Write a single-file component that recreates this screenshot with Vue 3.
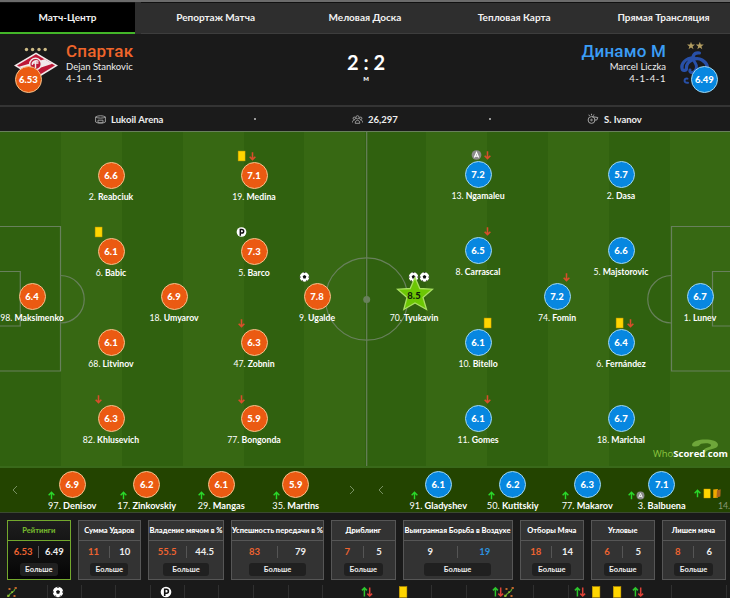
<template>
  <div class="match">
    <svg class="sprite" width="0" height="0">
      <symbol id="i-card" viewBox="0 0 12 12"><rect x="2.3" y="0.6" width="7.6" height="10.8" fill="#ffd500" stroke="#c99a00" stroke-width="0.5" /></symbol>
      <symbol id="i-second" viewBox="0 0 12 12">
        <path d="M1.5 1.2 7 .6V11L1.5 11.4z" fill="#f0a800" />
        <path d="M6 2 10.5 1 10 9.6 5.4 10.8z" fill="#b0641c" />
      </symbol>
      <symbol id="i-off" viewBox="0 0 12 12"><path d="M6 2v8M2.9 6.8 6 10 9.1 6.8" fill="none" stroke="#d94e2b" stroke-width="1.7" /></symbol>
      <symbol id="i-on" viewBox="0 0 12 12"><path d="M6 11V2M2.2 5.6 6 1.8 9.8 5.6" fill="none" stroke="#2ad82a" stroke-width="1.9" /></symbol>
      <symbol id="i-swap" viewBox="0 0 12 12">
        <path d="M3.4 10.5V2M.9 4.4 3.4 1.9 5.9 4.4" fill="none" stroke="#2cc42c" stroke-width="1.5" />
        <path d="M8.7 1.5V10M6.3 7.6 8.7 10 11.1 7.6" fill="none" stroke="#dc4136" stroke-width="1.5" />
      </symbol>
      <symbol id="i-ball" viewBox="0 0 12 12">
        <circle cx="6" cy="6" r="5.2" fill="#fff" />
        <path d="M6 3.9 8 5.3 7.2 7.7H4.8L4 5.3z" fill="#111" />
        <path d="M4.6.9h2.8L6 2zM.9 4.5.8 7l1.2-.8zM11.1 4.5l.1 2.5-1.2-.8zM2.4 9.8 4.5 11 4 9.5zM9.6 9.8 7.5 11 8 9.5z" fill="#111" />
      </symbol>
      <symbol id="i-pen" viewBox="0 0 12 12">
        <circle cx="6" cy="6" r="5.3" fill="#fff" />
        <path d="M4.7 10V3.2H6.4a2 2 0 0 1 0 4H4.7" fill="none" stroke="#111" stroke-width="1.6" />
      </symbol>
      <symbol id="i-assist" viewBox="0 0 12 12">
        <circle cx="6" cy="6" r="5.3" fill="#8b8b8b" />
        <path d="M3.6 8.8 6 3.2 8.4 8.8M4.5 7.2h3" fill="none" stroke="#fff" stroke-width="1.2" />
      </symbol>
      <symbol id="i-route" viewBox="0 0 12 12">
        <path d="M3 10C3 6.5 8.5 7 8.8 3" fill="none" stroke="#55a52c" stroke-width="1.4" />
        <path d="M2.5 2h2v2h-2zM8.6 1h2.2v2H8.6zM7.5 9h2v2h-2z" fill="#c2662b" />
        <path d="M1.2 8.8h2.2V11H1.2zM5.2 5.2h1.8V7H5.2z" fill="#8db832" />
      </symbol>
    </svg>

    <nav class="tabs">
      <a v-for="(t, i) in tabs" :key="t" class="tab" :class="{ active: i === 0 }">{{ t }}</a>
    </nav>

    <header class="score-head">
      <div class="crest">
        <svg width="45" height="46" viewBox="0 0 45 46">
          <g fill="#cdbb86"><circle cx="12.5" cy="8.5" r="1.7" /><circle cx="18.6" cy="8.5" r="1.7" /><circle cx="25" cy="8.5" r="1.7" /><circle cx="31.2" cy="8.5" r="1.7" /></g>
          <path d="M22 11.5 44 24.5 22 38 0 24.5z" fill="#f1e9ea" />
          <path d="M22 13.2 41 24.5 22 36 3 24.5z" fill="#bd1736" />
          <path d="M5 25.8 30.6 18.2 38.4 22.8 13.5 31z" fill="#f1e9ea" />
          <circle cx="21.5" cy="23" r="5.8" fill="#bd1736" stroke="#f1e9ea" stroke-width="1.4" />
          <path d="M24.5 20.5c-3-2-7 .5-6 3.5M18.5 22h6M21.5 20v7" fill="none" stroke="#f1e9ea" stroke-width="1.4" />
        </svg>
        <span class="rating home">6.53</span>
      </div>
      <div class="team">
        <div class="team-name">Спартак</div>
        <div class="coach">Dejan Stankovic</div>
        <div class="formation">4-1-4-1</div>
      </div>
      <div class="result">
        <div class="goals">2 : 2</div>
        <div class="status">м</div>
      </div>
      <div class="team away">
        <div class="team-name">Динамо М</div>
        <div class="coach">Marcel Liczka</div>
        <div class="formation">4-1-4-1</div>
      </div>
      <div class="crest away">
        <svg width="45" height="46" viewBox="0 0 45 46">
          <path id="st" d="M18 .8 19 3.6 22 3.6 19.6 5.4 20.5 8.2 18 6.5 15.5 8.2 16.4 5.4 14 3.6 17 3.6z" fill="#b39d61" />
          <path d="M26.8 .8 27.8 3.6 30.8 3.6 28.4 5.4 29.3 8.2 26.8 6.5 24.3 8.2 25.2 5.4 22.8 3.6 25.8 3.6z" fill="#b39d61" />
          <g fill="none" stroke="#2850a8" stroke-linecap="round">
            <path d="M26.5 12C20 11 18.5 17 21 20c2 3 4 6 1 10-2 2.600-6 2-5-1" stroke-width="3" />
            <path d="M21 16.500C12 17 8 23 9 27.500c.6 3 5 2.500 4.500-1C13.500 20 23 15.500 29 19c5 3 7 7 4 13" stroke-width="3.200" />
            <path d="M14.500 37.600c-3.500-1.200-4.500 5 .5 4.200" stroke-width="2" />
          </g>
        </svg>
        <span class="rating">6.49</span>
      </div>
    </header>

    <div class="info">
      <div class="info-item venue">
        <svg width="11" height="9" viewBox="0 0 11 9" fill="none" stroke="#a5a5a5" stroke-width="0.9"><path d="M.6 2C3 .3 8 .3 10.400 2v5C8 8.600 3 8.600.6 7zM.6 2c2 1.500 8 1.500 9.800 0M3 5.200h5v2.500H3z" /></svg>
        Lukoil Arena
      </div>
      <i class="dot"></i>
      <div class="info-item crowd">
        <svg width="11" height="9" viewBox="0 0 11 9" fill="none" stroke="#a5a5a5" stroke-width="0.9"><circle cx="5.500" cy="2.300" r="1.600" /><circle cx="2.300" cy="3.300" r="1.200" /><circle cx="8.700" cy="3.300" r="1.200" /><path d="M3.200 8.300c0-4 4.600-4 4.600 0zM.4 7.500c0-2 1-2.500 2.200-2.500M10.600 7.500c0-2-1-2.500-2.200-2.500" /></svg>
        26,297
      </div>
      <i class="dot"></i>
      <div class="info-item referee">
        <svg width="12" height="12" viewBox="0 0 12 12" fill="none" stroke="#a5a5a5" stroke-width="1"><circle cx="4.500" cy="7" r="3.400" /><path d="M5 3.600 10.800 4.500 9.800 7H7.800M4.500.8v1.500M1.800 1.700 2.600 3M7 1.500 6.300 2.700" /><circle cx="4.500" cy="7" r=".8" /></svg>
        S. Ivanov
      </div>
    </div>

    <section class="pitch">
      <svg class="lines" width="730" height="335" viewBox="0 0 730 335" fill="none" stroke="#68805c" stroke-width="1.200">
        <path d="M0 .5H730M366.700 0V335M0 95.500H60.500V240H0M0 140.500H20.300V195H0M730 95.500H671.500V240H730M730 140.500H712.500V195H730" />
        <path d="M60.500 144.500A23.500 23.500 0 0 1 60.500 192M671.500 144.500A23.500 23.500 0 0 0 671.500 192" />
        <circle cx="366.700" cy="168" r="41.200" />
        <circle cx="366.700" cy="168.500" r="3.500" fill="#68805c" stroke="none" />
      </svg>
      <div
        v-for="p in players"
        :key="p.name"
        class="player"
        :class="p.side"
        :style="{ left: p.x + 'px', top: p.y + 'px' }"
      >
        <div v-if="p.icons" class="marks">
          <svg v-for="(ic, i) in p.icons" :key="i" width="11" height="12"><use :href="'#i-' + ic" /></svg>
        </div>
        <div v-if="p.best" class="star">
          <svg width="38" height="36" viewBox="0 0 38 36"><path d="M19 1.500 23.800 12.500 36.500 13.200 27 21.500 30.500 33.500 19 27 7.800 33.500 11 21.500 1.500 13.200 14.200 12.500z" fill="#6cc704" stroke="#a9df62" stroke-width="1.300" /></svg>
          <span>{{ p.rate }}</span>
        </div>
        <span v-else class="rating" :class="p.side">{{ p.rate }}</span>
        <div class="pname"><span>{{ p.num }}.</span> {{ p.name }}</div>
      </div>
      <div class="brand">
        <svg width="28" height="17" viewBox="0 0 28 17"><path d="M1 6C1.500 2 8 .5 14 .5c7 0 13 1.800 13 5.200 0 3.500-6 4.300-9.500 5.300-1.800.6-2.500 1.500-3 2.500h-2.700c.2-3 2-4.200 4.700-5 2.500-.8 3.500-1.200 3.500-2.300 0-1.300-2.500-1.900-5.500-1.900-3.500 0-6 .8-6.500 2.500-2.500 1.200-7 1-7-.8z" fill="#6ea63a" /></svg>
        <div><span>Who</span>Scored<span>.</span>com</div>
      </div>
    </section>

    <section class="bench">
      <div v-for="b in bench" :key="b.side" class="bench-side" :class="b.side">
        <svg class="arrow" width="6" height="10" viewBox="0 0 6 10"><path d="M5 1 1 5 5 9" /></svg>
        <div v-for="s in b.list" :key="s.name" class="sub">
          <span class="rating" :class="b.side">{{ s.rate }}</span>
          <div class="pname"><span>{{ s.num }}.</span> {{ s.name }}</div>
          <div class="sub-marks" :style="{ left: s.off + 'px' }">
            <svg v-for="ic in s.icons" :key="ic" width="9" height="11"><use :href="'#i-' + ic" /></svg>
          </div>
        </div>
        <div v-if="b.side === 'away'" class="sub next">
          <div class="sub-marks">
            <svg width="9" height="11"><use href="#i-on" /></svg>
            <svg width="10" height="11"><use href="#i-card" /></svg>
            <svg width="10" height="11"><use href="#i-second" /></svg>
          </div>
          <span>14.</span>
        </div>
        <svg class="arrow right" width="6" height="10" viewBox="0 0 6 10"><path d="M1 1 5 5 1 9" /></svg>
      </div>
    </section>

    <section class="stats">
      <div v-for="(s, i) in stats" :key="s.title" class="stat" :class="{ active: i === 0 }">
        <div class="stat-title">{{ s.title }}</div>
        <div class="stat-vals">
          <b :class="{ hot: i === 0 || s.home > s.away }">{{ s.home }}</b>
          <b :class="{ cool: i > 0 && s.away > s.home }">{{ s.away }}</b>
        </div>
        <button>Больше</button>
      </div>
    </section>

    <section class="timeline">
      <i v-for="(w, i) in ticks" :key="i" class="tick" :style="{ width: w + 'px' }"></i>
      <svg v-for="e in events" :key="e.x" class="event" width="12" height="12" :style="{ left: e.x + 'px' }"><use :href="'#i-' + e.icon" /></svg>
    </section>
  </div>
</template>

<script setup>
const tabs = ['Матч-Центр', 'Репортаж Матча', 'Меловая Доска', 'Тепловая Карта', 'Прямая Трансляция']

// x / y - центр кружка относительно поля
const players = [
  { side: 'home', num: 98, name: 'Maksimenko', rate: '6.4', x: 32, y: 166 },
  { side: 'home', num: 2, name: 'Reabciuk', rate: '6.6', x: 111, y: 45 },
  { side: 'home', num: 6, name: 'Babic', rate: '6.1', x: 111, y: 121, icons: ['card'] },
  { side: 'home', num: 68, name: 'Litvinov', rate: '6.1', x: 111, y: 212 },
  { side: 'home', num: 82, name: 'Khlusevich', rate: '6.3', x: 111, y: 288, icons: ['off'] },
  { side: 'home', num: 18, name: 'Umyarov', rate: '6.9', x: 174, y: 166 },
  { side: 'home', num: 19, name: 'Medina', rate: '7.1', x: 254, y: 45, icons: ['card', 'off'] },
  { side: 'home', num: 5, name: 'Barco', rate: '7.3', x: 254, y: 121, icons: ['pen'] },
  { side: 'home', num: 47, name: 'Zobnin', rate: '6.3', x: 254, y: 212, icons: ['off'] },
  { side: 'home', num: 77, name: 'Bongonda', rate: '5.9', x: 254, y: 288, icons: ['off'] },
  { side: 'home', num: 9, name: 'Ugalde', rate: '7.8', x: 317, y: 166, icons: ['ball'] },
  { side: 'away', num: 70, name: 'Tyukavin', rate: '8.5', x: 414, y: 166, icons: ['ball', 'ball'], best: true },
  { side: 'away', num: 13, name: 'Ngamaleu', rate: '7.2', x: 478, y: 44, icons: ['assist', 'off'] },
  { side: 'away', num: 8, name: 'Carrascal', rate: '6.5', x: 478, y: 120, icons: ['off'] },
  { side: 'away', num: 10, name: 'Bitello', rate: '6.1', x: 478, y: 212, icons: ['card'] },
  { side: 'away', num: 11, name: 'Gomes', rate: '6.1', x: 478, y: 288, icons: ['off'] },
  { side: 'away', num: 74, name: 'Fomin', rate: '7.2', x: 557, y: 166, icons: ['off'] },
  { side: 'away', num: 2, name: 'Dasa', rate: '5.7', x: 621, y: 44 },
  { side: 'away', num: 5, name: 'Majstorovic', rate: '6.6', x: 621, y: 120 },
  { side: 'away', num: 6, name: 'Fernández', rate: '6.4', x: 621, y: 212, icons: ['card', 'off'] },
  { side: 'away', num: 18, name: 'Marichal', rate: '6.7', x: 621, y: 288 },
  { side: 'away', num: 1, name: 'Lunev', rate: '6.7', x: 700, y: 166 }
]

const bench = [
  {
    side: 'home',
    list: [
      { num: 97, name: 'Denisov', rate: '6.9', off: 12, icons: ['on'] },
      { num: 17, name: 'Zinkovskiy', rate: '6.2', off: 9, icons: ['on'] },
      { num: 29, name: 'Mangas', rate: '6.1', off: 13, icons: ['on'] },
      { num: 35, name: 'Martins', rate: '5.9', off: 13, icons: ['on'] }
    ]
  },
  {
    side: 'away',
    list: [
      { num: 91, name: 'Gladyshev', rate: '6.1', off: 9, icons: ['on'] },
      { num: 50, name: 'Kutitskiy', rate: '6.2', off: 11, icons: ['on'] },
      { num: 77, name: 'Makarov', rate: '6.3', off: 11, icons: ['on'] },
      { num: 3, name: 'Balbuena', rate: '7.1', off: 2, icons: ['on', 'assist'] }
    ]
  }
]

const stats = [
  { title: 'Рейтинги', home: 6.53, away: 6.49 },
  { title: 'Сумма Ударов', home: 11, away: 10 },
  { title: 'Владение мячом в %', home: 55.5, away: 44.5 },
  { title: 'Успешность передачи в %', home: 83, away: 79 },
  { title: 'Дриблинг', home: 7, away: 5 },
  { title: 'Выигранная Борьба в Воздухе', home: 9, away: 19 },
  { title: 'Отборы Мяча', home: 18, away: 14 },
  { title: 'Угловые', home: 6, away: 5 },
  { title: 'Лишен мяча', home: 8, away: 6 }
]

const ticks = [48, 34, 34, 35, 34, 34, 35, 35, 34, 109, 35, 67, 35, 103, 55]

const events = [
  { x: 6, icon: 'route' },
  { x: 52, icon: 'ball' },
  { x: 160, icon: 'pen' },
  { x: 361, icon: 'swap' },
  { x: 397, icon: 'card' },
  { x: 492, icon: 'swap' },
  { x: 503, icon: 'route' },
  { x: 574, icon: 'swap' },
  { x: 590, icon: 'card' },
  { x: 611, icon: 'card' },
  { x: 632, icon: 'swap' }
]
</script>

<style>
body { background: #1a1a1a; overflow: hidden; }
</style>

<style scoped>
.match { width: 730px; height: 598px; overflow: hidden; background: #1a1a1a; color: #eee; font-family: Lato, "Open Sans", sans-serif; display: flex; flex-direction: column; }
.match * { box-sizing: border-box; }
.sprite { position: absolute; }

.tabs { display: flex; height: 34px; flex: none; border-top: 2px solid #6b6b6b; background: #2e2e2e; }
.tab { flex: 0 0 149.3px; display: flex; align-items: center; justify-content: center; font-size: 10px; font-weight: 700; color: #f2f2f2; border-top: 1px solid #111; padding-bottom: 2px; white-space: nowrap; border-bottom: 1px solid #3d3d3d; }
.tab.active { flex-basis: 135px; margin-right: 6px; background: #000; border-bottom: 2px solid #43b629; padding-bottom: 1px; }

.score-head { display: flex; height: 73px; flex: none; padding: 7px 12px 0 14px; border-bottom: 2px solid #343434; }
.crest { position: relative; width: 45px; }
.crest svg { display: block; }
.crest .rating { position: absolute; left: 1px; top: 25px; }
.crest.away .rating { left: auto; right: 0; }
.team { width: 150px; margin-left: 7px; }
.team.away { margin: 0 7px 0 0; text-align: right; }
.team-name { color: #f0652a; font: 500 17px/20px Roboto, sans-serif; letter-spacing: 0.2px; }
.away .team-name { color: #3b9df5; }
.coach { font-size: 9.5px; line-height: 12px; }
.formation { font-size: 9.5px; line-height: 12px; letter-spacing: 0.6px; }
.result { flex: 1; text-align: center; padding-top: 9px; }
.goals { font-size: 20px; line-height: 24px; font-weight: 700; color: #fff; }
.status { font-size: 8px; line-height: 8px; font-weight: 700; }

.rating { display: flex; align-items: center; justify-content: center; width: 27px; height: 27px; border-radius: 50%; background: #0787e0; border: 1px solid #a2d8f0; color: #fff; font-size: 9.5px; font-weight: 900; }
.rating.home { background: #eb5a12; border-color: #f3c38c; }

.info { display: flex; align-items: center; height: 24px; flex: none; padding-left: 95px; font-size: 9.5px; font-weight: 700; background: #1b1b1b; }
.info-item { display: flex; align-items: center; gap: 5px; }
.venue { width: 159px; }
.crowd { width: 136px; padding-left: 96px; width: 233px; }
.referee { padding-left: 96px; }
.dot { width: 2px; height: 2px; background: #999; }

.pitch { position: relative; height: 335px; flex: none; overflow: hidden; background: repeating-linear-gradient(90deg, #30610f 0 60.9px, #376813 60.9px 121.8px); }
.lines { position: absolute; left: 0; top: 0; }
.player { position: absolute; width: 0; height: 0; display: flex; flex-direction: column; align-items: center; }
.player > .rating { flex: none; margin-top: -14px; }
.marks { position: absolute; top: -26px; left: -18px; display: flex; }
.player.away .marks { left: auto; right: -15px; }
.pname { font-size: 8.7px; line-height: 11px; font-weight: 700; color: #fff; white-space: nowrap; margin-top: 2px; }
.pname span { font-weight: 400; }
.star { position: relative; flex: none; width: 38px; height: 29px; margin-top: -16px; display: flex; justify-content: center; }
.star svg { position: absolute; left: 1px; top: -5px; }
.star span { position: relative; color: #10200a; font-size: 9.5px; font-weight: 900; line-height: 29px; }
.player.away:has(.star) .marks { right: -16px; }
.brand { position: absolute; left: 653px; top: 309px; font: 700 9.5px/12px "Open Sans", sans-serif; color: #fff; padding-top: 8px; }
.brand svg { position: absolute; left: 38px; top: -1px; }
.brand div { position: relative; }
.brand span { color: #8cc63f; font-weight: 400; }

.bench { display: flex; height: 47px; flex: none; background: #234400; border-top: 2px solid #39691a; border-bottom: 1px solid #3b4a30; }
.bench-side { display: flex; align-items: flex-start; width: 366px; padding-left: 12px; }
.bench-side.away { width: 364px; overflow: hidden; }
.arrow { fill: none; stroke: #779061; stroke-width: 1; margin: 17px 17px 0 0; flex: none; }
.arrow.right { margin: 17px 0 0 16px; }
.away .arrow.right { margin-left: -16px; }
.sub { position: relative; width: 74.5px; flex: none; display: flex; flex-direction: column; align-items: center; padding-top: 3px; }
.sub .pname { font-size: 9.2px; margin-top: 2px; }
.sub-marks { position: absolute; top: 22px; display: flex; }
.next { width: 50px; height: 44px; }
.next .sub-marks { left: -6px; top: 20px; }
.next > span { margin-top: 29px; font-size: 8.7px; line-height: 11px; color: #8a9a78; }

.stats { display: grid; grid-template-columns: 63.5px 63.5px 76px 93px 64.5px 110px 64.5px 63.5px 64px; gap: 7px; padding: 7px 0 0 7px; flex: none; }
.stat { height: 60px; border: 1px solid #565656; background: #333; display: flex; flex-direction: column; align-items: center; }
.stat-title { width: 100%; height: 20px; border-bottom: 1px solid #565656; font-size: 7.5px; line-height: 19px; font-weight: 900; text-align: center; white-space: nowrap; display: flex; justify-content: center; color: #fff; }
.stat-vals { width: 100%; display: flex; padding-top: 5px; }
.stat-vals b { flex: 1; text-align: center; font-size: 9.5px; line-height: 12px; font-weight: 700; }
.stat-vals b + b { border-left: 1px solid #555; }
.hot { color: #ee6330; }
.cool { color: #2d91de; }
.stat button { width: 62%; height: 13px; margin-top: 5px; padding: 0; border: 0; border-radius: 3px; background: #202020; color: #eee; font: 700 7.5px/13px Lato, sans-serif; }
.stat.active { border-color: #73a82d; background: linear-gradient(#1e1e1e, #050505); }
.active .stat-title { border-color: #73a82d; color: #73b52d; }

.timeline { position: relative; display: flex; height: 13px; margin-top: 5px; flex: none; }
.tick { border-right: 1px solid #303030; flex: none; }
.event { position: absolute; top: 1px; }
</style>
